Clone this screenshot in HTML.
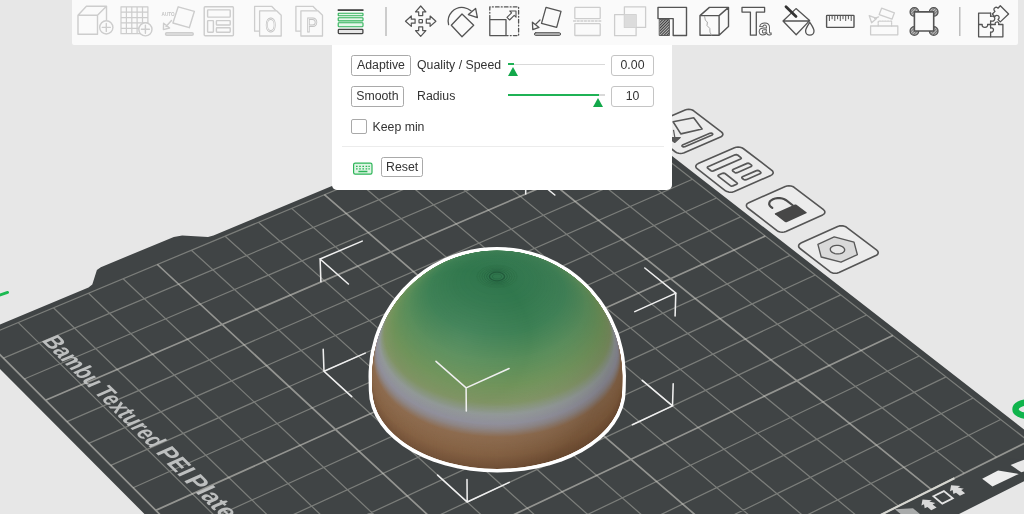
<!DOCTYPE html>
<html><head><meta charset="utf-8"><title>Variable layer height</title>
<style>
html,body{margin:0;padding:0}
body{width:1024px;height:514px;overflow:hidden;background:#e7e7e7;position:relative;font-family:"Liberation Sans",sans-serif;color:#3c3c3c}
svg{position:absolute;left:0;top:0;will-change:transform}
#panel{will-change:transform}
#tbbg{position:absolute;left:72px;top:-4px;width:945.5px;height:48.5px;background:#fafafa;border-radius:2px}
#panel{position:absolute;left:331.5px;top:44.5px;width:340px;height:145px;background:#fff;border-radius:0 0 5px 5px}
#panel div,#panel span{position:absolute;box-sizing:border-box}
.btn{border:1px solid #a9a9a9;border-radius:2.5px;font-size:12.3px;line-height:19px;height:20.5px;text-align:center;color:#333;background:#fff}
.lbl{font-size:12.3px;line-height:20px;color:#333;white-space:nowrap}
.val{border:1px solid #c4c4c4;border-radius:3px;font-size:12.3px;line-height:19px;height:20.5px;width:43px;text-align:center;color:#333}
.trk{height:1.6px;background:#d9d9d9;left:176px;width:97px}
.grn{height:2px;background:#1fb255;left:176px}
.th{width:0;height:0;border-left:5.7px solid transparent;border-right:5.7px solid transparent;border-bottom:9.6px solid #12a84a}
</style></head><body>
<svg width="1024" height="514" viewBox="0 0 1024 514">
<path d="M416.8 787.3L1064.4 460.9L578.5 83.2L213.5 235.4L208 237.1L182.2 235.5L173.8 236.9L100.8 267.2L96.9 270.1L92.3 284.5L88.5 287.5L-31.4 337.5Z" fill="#404445"/>
<path d="M-17.3 337.4L576.9 89.3M438.1 735.5L18.3 322.6M3.4 358.1L599.4 106.8M475.7 716.8L53.5 307.8M24.3 379L622.3 124.6M512.9 698.2L88.5 293.2M549.7 679.9L123.1 278.8M67 421.6L668.8 160.9M88.7 443.4L692.5 179.3M622.3 643.7L191.4 250.2M110.8 465.4L716.5 198M658 625.9L225.1 236.2M133.1 487.7L740.7 216.9M693.4 608.3L258.5 222.2M728.4 590.8L291.6 208.4M178.7 533.3L790.1 255.4M202 556.5L815.3 275M797.4 556.4L357 181.1M225.6 580.1L840.8 294.9M831.4 539.5L389.2 167.6M249.5 604L866.6 315M865.1 522.7L421.2 154.3M898.4 506.1L452.8 141.1M298.3 652.7L919.2 356M323.2 677.6L946.1 376.9M964.2 473.3L515.4 114.9M348.4 702.9L973.2 398M996.5 457.2L546.3 102M374.1 728.5L1000.7 419.5M1028.6 441.2L576.9 89.3" stroke="#d2d2c8" stroke-opacity=".4" stroke-width="1.25" fill="none"/>
<path d="M400.1 754.5L-17.3 337.4M45.5 400.2L645.4 142.7M586.2 661.7L157.4 264.5M155.8 510.4L765.3 236M763.1 573.5L324.4 194.7M273.7 628.2L892.8 335.4M931.5 489.6L484.2 127.9M400.1 754.5L1028.6 441.2" stroke="#dad9d0" stroke-opacity=".54" stroke-width="1.7" fill="none"/>
<text transform="matrix(2.1234 2.0860 -3.5666 1.5183 41.02 340.45)" font-family="Liberation Sans, sans-serif" font-weight="bold" font-size="6.50" fill="#bdbfbf" textLength="23.00" lengthAdjust="spacingAndGlyphs">Bambu</text>
<text transform="matrix(2.1966 2.1579 -3.6007 1.5706 92.88 391.39)" font-family="Liberation Sans, sans-serif" font-weight="bold" font-size="6.50" fill="#bdbfbf" textLength="26.60" lengthAdjust="spacingAndGlyphs">Textured</text>
<text transform="matrix(2.2568 2.2170 -3.6278 1.6136 154.90 452.31)" font-family="Liberation Sans, sans-serif" font-weight="bold" font-size="6.50" fill="#bdbfbf" textLength="11.40" lengthAdjust="spacingAndGlyphs">PEI</text>
<text transform="matrix(2.3044 2.2637 -3.6484 1.6475 183.36 480.27)" font-family="Liberation Sans, sans-serif" font-weight="bold" font-size="6.50" fill="#bdbfbf" textLength="17.60" lengthAdjust="spacingAndGlyphs">Plate</text>
<path d="M693.7 110.8L692.3 110L690.5 109.5L688.7 109.4L686.8 109.5L685.1 110L649 125.5L647.6 126.3L646.8 127.3L646.5 128.4L646.9 129.5L647.8 130.4L675.5 152L676.9 152.8L678.7 153.3L680.6 153.5L682.5 153.3L684.2 152.8L720.5 137.1L721.8 136.3L722.6 135.3L722.9 134.2L722.5 133.1L721.6 132.1Z" fill="#ececec" stroke="#555" stroke-width="1.6" stroke-linejoin="round"/>
<path d="M712.4 133.4L711.2 133L709.9 133.2L682.5 145L681.9 145.7L682.2 146.4L682.3 146.5L683.5 146.9L684.8 146.7L712.2 134.9L712.8 134.2L712.5 133.5ZM673.1 121.8L693.7 117.7L702.1 129L680.8 133.9Z" fill="none" stroke="#585858" stroke-width="1.6" stroke-linejoin="round"/>
<path d="M673.5 129.8L674.9 137.8M668.6 137.7L674.7 142.5L680.2 137.5Z" fill="#585858" stroke="#585858" stroke-width="1.2" stroke-linejoin="round"/>
<path d="M743.2 148.5L741.8 147.7L740 147.2L738.1 147.1L736.2 147.2L734.5 147.7L698.2 163.6L696.8 164.4L696 165.4L695.8 166.5L696.1 167.6L697.1 168.7L725.5 190.8L727 191.6L728.8 192.1L730.7 192.3L732.6 192.1L734.3 191.6L770.8 175.4L772.2 174.6L773 173.6L773.2 172.5L772.8 171.4L771.8 170.3Z" fill="#ececec" stroke="#555" stroke-width="1.6" stroke-linejoin="round"/>
<path d="M737.6 155L736.4 154.6L735.1 154.8L707.9 166.7L707.3 167.3L707.6 168.1L711 170.7L712.1 171.1L713.4 170.9L740.6 159L741.3 158.3L740.9 157.6ZM725 173.5L723.8 173.1L722.5 173.3L718.7 175L718 175.6L718.4 176.4L730.4 185.7L731.6 186.1L732.8 185.9L736.7 184.2L737.4 183.6L737 182.8ZM749.5 163.6L748.4 163.2L747.1 163.4L733 169.5L732.4 170.2L732.7 171L734.7 172.4L735.8 172.9L737.1 172.7L751.2 166.5L751.8 165.8L751.5 165.1ZM758.9 170.8L757.8 170.4L756.5 170.6L742.4 176.7L741.8 177.4L742.1 178.2L743.8 179.5L745 179.9L746.3 179.7L760.4 173.5L761 172.8L760.6 172.1Z" fill="none" stroke="#585858" stroke-width="1.7" stroke-linejoin="round"/>
<path d="M794.1 187.3L792.7 186.5L790.9 186L788.9 185.8L787 186L785.3 186.5L748.8 202.7L747.4 203.6L746.6 204.6L746.4 205.8L746.8 206.9L747.7 208L777 230.6L778.4 231.5L780.2 232L782.2 232.2L784.2 232L785.9 231.5L822.6 214.9L823.9 214.1L824.7 213L824.9 211.9L824.5 210.7L823.5 209.7Z" fill="#ececec" stroke="#555" stroke-width="1.6" stroke-linejoin="round"/>
<path d="M796.5 204.7L795.7 204.4L794.9 204.5L775.2 213.3L774.7 213.8L775 214.3L785 222L785.8 222.3L786.6 222.2L806.3 213.3L806.8 212.9L806.5 212.3Z" fill="#474747"/>
<path d="M772.3 207.9L771 207L769.8 205.7L769.2 204.3L769.3 202.9L769.9 201.5L771.2 200.3L772.9 199.3L775.1 198.5L777.5 198.2L779.9 198.2L782.3 198.5L784.4 199.2L786.1 200.2L793 205.5" fill="none" stroke="#4c4c4c" stroke-width="2.2" stroke-linecap="round"/>
<path d="M846.6 227.3L845.1 226.5L843.3 225.9L841.4 225.7L839.4 225.9L837.7 226.5L800.9 243.1L799.6 244L798.8 245L798.6 246.2L799 247.4L800 248.5L830 271.7L831.5 272.6L833.3 273.2L835.3 273.3L837.3 273.1L839 272.6L875.9 255.6L877.2 254.8L878 253.7L878.2 252.5L877.8 251.3L876.8 250.2Z" fill="#ececec" stroke="#555" stroke-width="1.6" stroke-linejoin="round"/>
<path d="M854 242.1L834.2 236.9L817.9 244.4L821.2 257L841 262.2L857.4 254.7Z" fill="#d9d9d9" stroke="#585858" stroke-width="1.35" stroke-linejoin="round"/>
<path d="M843 247.1L841.7 246.3L840 245.7L838.2 245.3L836.3 245.3L834.5 245.6L832.9 246.1L831.6 246.9L830.7 247.9L830.3 248.9L830.4 250.1L830.9 251.2L831.9 252.2L833.3 253L834.9 253.6L836.7 253.9L838.6 253.9L840.4 253.7L842 253.1L843.3 252.3L844.2 251.4L844.6 250.3L844.6 249.2L844 248.1L843 247.1Z" fill="#e6e6e6" stroke="#585858" stroke-width="1.35"/>
<path d="M982.2 478.8L998.1 470.5L1018.8 473.9L992.4 486.5Z" fill="#ededed"/>
<path d="M1002.6 457.8L1047.6 464.2" stroke="#3f4345" stroke-width="1.3"/>
<path d="M933.4 496.3L943.9 491.1L952.8 498.3L942.3 503.6Z" fill="none" stroke="#e4e4e4" stroke-width="1.8"/>
<path d="M921.4 505.6L922.5 499.6L931.9 500.3L929.3 501.6L935.3 503L932.6 504.4L936.6 507.5L931.3 510.2L927.4 507L924.7 508.3L924 504.3Z" fill="#dadada"/>
<path d="M950 491.3L951.1 485.3L960.5 486L957.9 487.4L963.8 488.7L961.2 490.1L965.1 493.2L959.9 495.8L956 492.7L953.4 494L952.6 490Z" fill="#dadada"/>
<path d="M894.9 509.3L913 508.3L930.9 523L918.9 529Z" fill="#a9abab"/>
<path d="M745.8 582.1L954.4 478.2" stroke="#d6d6d0" stroke-width="2.1" fill="none"/>
<path d="M1010.6 465L1025 459.3V471.2L1021.3 472.2Z" fill="#e7e7e7"/>
<path d="M486.1 299.7L525.6 282.3L554.1 306.3M525.6 282.3L525.6 260.4" stroke="#efefef" stroke-width="1.55" fill="none"/>
<defs><clipPath id="dc"><path d="M372 376.6L372.1 371.6L373 361.5L373.5 356.6L374.4 351.7L377.1 340.8L378.2 337L379.6 333.1L381.1 329.3L384.3 321.9L386.1 318.2L388 314.6L393.4 305.9L395.7 302.5L398.2 299.2L403.4 292.9L406.1 289.9L414.2 282.1L417.2 279.4L425.2 273.2L428.6 271L435.4 266.8L445 261.8L454.8 257.8L463.9 254.9L472.3 252.9L480.7 251.5L489 250.7L497 250.4L505 250.7L513 251.5L521.3 252.8L529.6 254.8L537.8 257.3L546.7 260.8L556.2 265.4L565.5 271L568.9 273.2L575.2 278.1L578.5 280.7L585.8 287.6L588.8 290.6L595.9 299.2L598.5 302.5L600.8 305.9L605.1 312.8L607.2 316.4L609.1 320.1L613.6 330.3L615.1 334.1L616.4 337.9L619.5 349.7L620.3 353.6L621.1 358.5L622.2 370.7L622.5 375.6L622.4 380.5L622.3 385.5L622.2 390.4L621.5 398.6L619.5 406.7L616.1 414.7L611.4 422.3L605.5 429.7L598.4 436.6L590.1 443L580.9 448.8L570.7 454L559.8 458.4L548.1 462.2L535.9 465.1L523.3 467.2L510.3 468.5L497.3 469L484.2 468.5L471.3 467.2L458.7 465.1L446.5 462.2L434.8 458.4L423.8 454L413.7 448.8L404.4 443L396.2 436.6L389.1 429.7L383.1 422.3L378.5 414.7L375.1 406.7L373 398.6L372.3 390.4L372.2 385.5L372.1 380.5Z"/></clipPath>
<radialGradient id="hl" gradientUnits="userSpaceOnUse" cx="462" cy="338" r="150"><stop offset="0" stop-color="#fff" stop-opacity=".07"/><stop offset=".45" stop-color="#fff" stop-opacity=".01"/><stop offset="1" stop-color="#000" stop-opacity=".12"/></radialGradient></defs>
<path d="M372 376.6L372.1 371.6L373 361.5L373.5 356.6L374.4 351.7L377.1 340.8L378.2 337L379.6 333.1L381.1 329.3L384.3 321.9L386.1 318.2L388 314.6L393.4 305.9L395.7 302.5L398.2 299.2L403.4 292.9L406.1 289.9L414.2 282.1L417.2 279.4L425.2 273.2L428.6 271L435.4 266.8L445 261.8L454.8 257.8L463.9 254.9L472.3 252.9L480.7 251.5L489 250.7L497 250.4L505 250.7L513 251.5L521.3 252.8L529.6 254.8L537.8 257.3L546.7 260.8L556.2 265.4L565.5 271L568.9 273.2L575.2 278.1L578.5 280.7L585.8 287.6L588.8 290.6L595.9 299.2L598.5 302.5L600.8 305.9L605.1 312.8L607.2 316.4L609.1 320.1L613.6 330.3L615.1 334.1L616.4 337.9L619.5 349.7L620.3 353.6L621.1 358.5L622.2 370.7L622.5 375.6L622.4 380.5L622.3 385.5L622.2 390.4L621.5 398.6L619.5 406.7L616.1 414.7L611.4 422.3L605.5 429.7L598.4 436.6L590.1 443L580.9 448.8L570.7 454L559.8 458.4L548.1 462.2L535.9 465.1L523.3 467.2L510.3 468.5L497.3 469L484.2 468.5L471.3 467.2L458.7 465.1L446.5 462.2L434.8 458.4L423.8 454L413.7 448.8L404.4 443L396.2 436.6L389.1 429.7L383.1 422.3L378.5 414.7L375.1 406.7L373 398.6L372.3 390.4L372.2 385.5L372.1 380.5Z" fill="#fff" stroke="#fff" stroke-width="7" stroke-linejoin="round"/>
<g clip-path="url(#dc)">
<ellipse cx="497.3" cy="390.4" rx="124.9" ry="78.6" fill="#765236"/>
<ellipse cx="497.3" cy="389.4" rx="125" ry="78.6" fill="#775337"/>
<ellipse cx="497.3" cy="388.4" rx="125" ry="78.6" fill="#785438"/>
<ellipse cx="497.3" cy="387.4" rx="125" ry="78.6" fill="#7a5538"/>
<ellipse cx="497.3" cy="386.4" rx="125" ry="78.6" fill="#7b5639"/>
<ellipse cx="497.3" cy="385.5" rx="125.1" ry="78.5" fill="#7c573a"/>
<ellipse cx="497.3" cy="384.5" rx="125.1" ry="78.5" fill="#7d583a"/>
<ellipse cx="497.3" cy="383.5" rx="125.1" ry="78.5" fill="#7e593b"/>
<ellipse cx="497.3" cy="382.5" rx="125.1" ry="78.5" fill="#805a3c"/>
<ellipse cx="497.3" cy="381.5" rx="125.1" ry="78.5" fill="#815b3d"/>
<ellipse cx="497.3" cy="380.5" rx="125.2" ry="78.5" fill="#825c3e"/>
<ellipse cx="497.3" cy="379.5" rx="125.2" ry="78.5" fill="#835e3e"/>
<ellipse cx="497.2" cy="378.6" rx="125.2" ry="78.5" fill="#845f3f"/>
<ellipse cx="497.2" cy="377.6" rx="125.2" ry="78.5" fill="#866040"/>
<ellipse cx="497.2" cy="376.6" rx="125.2" ry="78.5" fill="#866040"/>
<ellipse cx="497.2" cy="375.6" rx="125.2" ry="78.4" fill="#876141"/>
<ellipse cx="497.2" cy="374.6" rx="125.2" ry="78.4" fill="#876142"/>
<ellipse cx="497.2" cy="373.6" rx="125.2" ry="78.3" fill="#876242"/>
<ellipse cx="497.2" cy="372.6" rx="125.1" ry="78.3" fill="#886343"/>
<ellipse cx="497.2" cy="371.6" rx="125.1" ry="78.2" fill="#886344"/>
<ellipse cx="497.2" cy="370.7" rx="125" ry="78.2" fill="#886444"/>
<ellipse cx="497.2" cy="369.7" rx="124.9" ry="78.1" fill="#896445"/>
<ellipse cx="497.2" cy="368.7" rx="124.8" ry="78" fill="#896546"/>
<ellipse cx="497.2" cy="367.7" rx="124.7" ry="77.9" fill="#896546"/>
<ellipse cx="497.2" cy="366.7" rx="124.6" ry="77.8" fill="#8a6647"/>
<ellipse cx="497.2" cy="365.7" rx="124.5" ry="77.7" fill="#8a6648"/>
<ellipse cx="497.2" cy="364.7" rx="124.3" ry="77.6" fill="#8b6748"/>
<ellipse cx="497.2" cy="363.7" rx="124.2" ry="77.5" fill="#8b6749"/>
<ellipse cx="497.2" cy="362.7" rx="124" ry="77.4" fill="#8b684a"/>
<ellipse cx="497.2" cy="361.7" rx="123.8" ry="77.2" fill="#8c684a"/>
<ellipse cx="497.2" cy="360.7" rx="123.6" ry="77.1" fill="#8c694b"/>
<ellipse cx="497.2" cy="359.7" rx="123.4" ry="76.9" fill="#8c6d54"/>
<ellipse cx="497.2" cy="358.7" rx="123.2" ry="76.8" fill="#8c715c"/>
<ellipse cx="497.2" cy="357.7" rx="123" ry="76.6" fill="#8c7565"/>
<ellipse cx="497.2" cy="356.7" rx="122.7" ry="76.4" fill="#8c796d"/>
<ellipse cx="497.2" cy="355.7" rx="122.5" ry="76.2" fill="#8c7d76"/>
<ellipse cx="497.2" cy="354.7" rx="122.2" ry="76" fill="#8c817e"/>
<ellipse cx="497.2" cy="353.7" rx="121.9" ry="75.8" fill="#8c8586"/>
<ellipse cx="497.2" cy="352.7" rx="121.6" ry="75.6" fill="#8d878b"/>
<ellipse cx="497.2" cy="351.7" rx="121.3" ry="75.4" fill="#8e8990"/>
<ellipse cx="497.2" cy="350.7" rx="120.9" ry="75.1" fill="#8e8c95"/>
<ellipse cx="497.2" cy="349.7" rx="120.6" ry="74.9" fill="#8f8e9a"/>
<ellipse cx="497.2" cy="348.7" rx="120.2" ry="74.7" fill="#8f8f99"/>
<ellipse cx="497.2" cy="347.7" rx="119.8" ry="74.4" fill="#8f9099"/>
<ellipse cx="497.1" cy="346.6" rx="119.4" ry="74.1" fill="#8f9298"/>
<ellipse cx="497.1" cy="345.6" rx="119" ry="73.9" fill="#909398"/>
<ellipse cx="497.1" cy="344.6" rx="118.6" ry="73.6" fill="#909497"/>
<ellipse cx="497.1" cy="343.6" rx="118.2" ry="73.3" fill="#909597"/>
<ellipse cx="497.1" cy="342.6" rx="117.7" ry="73" fill="#909796"/>
<ellipse cx="497.1" cy="341.6" rx="117.3" ry="72.7" fill="#8f9792"/>
<ellipse cx="497.1" cy="340.6" rx="116.8" ry="72.3" fill="#8c968c"/>
<ellipse cx="497.1" cy="339.6" rx="116.3" ry="72" fill="#8a9585"/>
<ellipse cx="497.1" cy="338.5" rx="115.8" ry="71.7" fill="#88957f"/>
<ellipse cx="497.1" cy="337.5" rx="115.2" ry="71.3" fill="#869479"/>
<ellipse cx="497.1" cy="336.5" rx="114.7" ry="71" fill="#849473"/>
<ellipse cx="497.1" cy="335.5" rx="114.1" ry="70.6" fill="#82936c"/>
<ellipse cx="497.1" cy="334.5" rx="113.5" ry="70.2" fill="#7f9266"/>
<ellipse cx="497.1" cy="333.5" rx="112.9" ry="69.8" fill="#7e9262"/>
<ellipse cx="497.1" cy="332.4" rx="112.3" ry="69.4" fill="#7c9261"/>
<ellipse cx="497.1" cy="331.4" rx="111.7" ry="69" fill="#7b9260"/>
<ellipse cx="497.1" cy="330.4" rx="111" ry="68.6" fill="#79925f"/>
<ellipse cx="497.1" cy="329.4" rx="110.3" ry="68.1" fill="#78925e"/>
<ellipse cx="497.1" cy="328.4" rx="109.7" ry="67.7" fill="#77925d"/>
<ellipse cx="497.1" cy="327.3" rx="108.9" ry="67.2" fill="#75925d"/>
<ellipse cx="497.1" cy="326.3" rx="108.2" ry="66.7" fill="#74925c"/>
<ellipse cx="497.1" cy="325.3" rx="107.5" ry="66.3" fill="#73925b"/>
<ellipse cx="497.1" cy="324.3" rx="106.7" ry="65.8" fill="#71925a"/>
<ellipse cx="497.1" cy="323.2" rx="105.9" ry="65.2" fill="#709259"/>
<ellipse cx="497.1" cy="322.2" rx="105.1" ry="64.7" fill="#6e9258"/>
<ellipse cx="497.1" cy="321.2" rx="104.2" ry="64.2" fill="#6d9258"/>
<ellipse cx="497.1" cy="320.2" rx="103.4" ry="63.6" fill="#6b9158"/>
<ellipse cx="497.1" cy="319.1" rx="102.5" ry="63.1" fill="#6a9158"/>
<ellipse cx="497.1" cy="318.1" rx="101.6" ry="62.5" fill="#689158"/>
<ellipse cx="497.1" cy="317.1" rx="100.6" ry="61.9" fill="#679058"/>
<ellipse cx="497.1" cy="316" rx="99.7" ry="61.3" fill="#659058"/>
<ellipse cx="497.1" cy="315" rx="98.7" ry="60.7" fill="#638f58"/>
<ellipse cx="497.1" cy="314" rx="97.7" ry="60" fill="#628f58"/>
<ellipse cx="497.1" cy="312.9" rx="96.6" ry="59.4" fill="#608f58"/>
<ellipse cx="497.1" cy="311.9" rx="95.6" ry="58.7" fill="#5f8e58"/>
<ellipse cx="497.1" cy="310.9" rx="94.5" ry="58" fill="#5d8e58"/>
<ellipse cx="497" cy="309.8" rx="93.3" ry="57.3" fill="#5b8d58"/>
<ellipse cx="497" cy="308.8" rx="92.2" ry="56.5" fill="#5a8d58"/>
<ellipse cx="497" cy="307.8" rx="91" ry="55.8" fill="#588d58"/>
<ellipse cx="497" cy="306.7" rx="89.7" ry="55" fill="#578c58"/>
<ellipse cx="497" cy="305.7" rx="88.5" ry="54.2" fill="#558b58"/>
<ellipse cx="497" cy="304.6" rx="87.2" ry="53.4" fill="#528a57"/>
<ellipse cx="497" cy="303.6" rx="85.8" ry="52.6" fill="#508957"/>
<ellipse cx="497" cy="302.6" rx="84.4" ry="51.7" fill="#4e8856"/>
<ellipse cx="497" cy="301.5" rx="83" ry="50.8" fill="#4c8756"/>
<ellipse cx="497" cy="300.5" rx="81.5" ry="49.9" fill="#4a8655"/>
<ellipse cx="497" cy="299.4" rx="80" ry="48.9" fill="#488555"/>
<ellipse cx="497" cy="298.4" rx="78.4" ry="47.9" fill="#468455"/>
<ellipse cx="497" cy="297.4" rx="76.8" ry="46.9" fill="#448354"/>
<ellipse cx="497" cy="296.3" rx="75.1" ry="45.9" fill="#428254"/>
<ellipse cx="497" cy="295.3" rx="73.3" ry="44.8" fill="#408153"/>
<ellipse cx="497" cy="294.2" rx="71.5" ry="43.7" fill="#3e8053"/>
<ellipse cx="497" cy="293.2" rx="69.6" ry="42.5" fill="#3b7f52"/>
<ellipse cx="497" cy="292.1" rx="67.7" ry="41.3" fill="#3a7e52"/>
<ellipse cx="497" cy="291.1" rx="65.6" ry="40" fill="#397d51"/>
<ellipse cx="497" cy="290" rx="63.5" ry="38.7" fill="#387c51"/>
<ellipse cx="497" cy="289" rx="61.2" ry="37.3" fill="#377c50"/>
<ellipse cx="497" cy="287.9" rx="58.8" ry="35.9" fill="#367b4f"/>
<ellipse cx="497" cy="286.9" rx="56.3" ry="34.3" fill="#357a4f"/>
<ellipse cx="497" cy="285.8" rx="53.7" ry="32.7" fill="#347a4e"/>
<ellipse cx="497" cy="284.8" rx="50.9" ry="31" fill="#33794e"/>
<ellipse cx="497" cy="283.7" rx="47.9" ry="29.1" fill="#32784d"/>
<ellipse cx="497" cy="282.7" rx="44.6" ry="27.1" fill="#31774c"/>
<ellipse cx="497" cy="281.6" rx="41" ry="25" fill="#30774c"/>
<ellipse cx="497" cy="280.5" rx="37.1" ry="22.6" fill="#2f764c"/>
<ellipse cx="497" cy="279.5" rx="32.6" ry="19.8" fill="#2f764b"/>
<ellipse cx="497" cy="278.4" rx="27.4" ry="16.6" fill="#2e754b"/>
<ellipse cx="497" cy="277.4" rx="20.7" ry="12.6" fill="#2e754a"/>
<ellipse cx="497" cy="276.3" rx="10.4" ry="6.3" fill="#2d744a"/>
<path d="M372 376.6L372.1 371.6L373 361.5L373.5 356.6L374.4 351.7L377.1 340.8L378.2 337L379.6 333.1L381.1 329.3L384.3 321.9L386.1 318.2L388 314.6L393.4 305.9L395.7 302.5L398.2 299.2L403.4 292.9L406.1 289.9L414.2 282.1L417.2 279.4L425.2 273.2L428.6 271L435.4 266.8L445 261.8L454.8 257.8L463.9 254.9L472.3 252.9L480.7 251.5L489 250.7L497 250.4L505 250.7L513 251.5L521.3 252.8L529.6 254.8L537.8 257.3L546.7 260.8L556.2 265.4L565.5 271L568.9 273.2L575.2 278.1L578.5 280.7L585.8 287.6L588.8 290.6L595.9 299.2L598.5 302.5L600.8 305.9L605.1 312.8L607.2 316.4L609.1 320.1L613.6 330.3L615.1 334.1L616.4 337.9L619.5 349.7L620.3 353.6L621.1 358.5L622.2 370.7L622.5 375.6L622.4 380.5L622.3 385.5L622.2 390.4L621.5 398.6L619.5 406.7L616.1 414.7L611.4 422.3L605.5 429.7L598.4 436.6L590.1 443L580.9 448.8L570.7 454L559.8 458.4L548.1 462.2L535.9 465.1L523.3 467.2L510.3 468.5L497.3 469L484.2 468.5L471.3 467.2L458.7 465.1L446.5 462.2L434.8 458.4L423.8 454L413.7 448.8L404.4 443L396.2 436.6L389.1 429.7L383.1 422.3L378.5 414.7L375.1 406.7L373 398.6L372.3 390.4L372.2 385.5L372.1 380.5Z" fill="url(#hl)"/>
<ellipse cx="497" cy="276.5" rx="4.5" ry="2.5" fill="none" stroke="#143f2a" stroke-opacity="0.22" stroke-width="0.8"/>
<ellipse cx="497" cy="276.5" rx="7.6" ry="4.3" fill="none" stroke="#143f2a" stroke-opacity="0.5" stroke-width="1.3"/>
<ellipse cx="497" cy="276.5" rx="10.4" ry="5.8" fill="none" stroke="#143f2a" stroke-opacity="0.32" stroke-width="0.8"/>
<ellipse cx="497" cy="276.5" rx="12.8" ry="7.2" fill="none" stroke="#143f2a" stroke-opacity="0.26" stroke-width="0.8"/>
<ellipse cx="497" cy="276.5" rx="15.2" ry="8.5" fill="none" stroke="#143f2a" stroke-opacity="0.18" stroke-width="0.8"/>
<ellipse cx="497" cy="276.5" rx="17.6" ry="9.9" fill="none" stroke="#143f2a" stroke-opacity="0.12" stroke-width="0.8"/>
<ellipse cx="497" cy="276.5" rx="20" ry="11.2" fill="none" stroke="#143f2a" stroke-opacity="0.07" stroke-width="0.8"/>
</g>
<path d="M509.2 482.4L467.2 502L437.6 475.1M467.2 502L467 479.6M509.1 368.5L466.1 387.9L436 361.3M466.1 387.9L466.3 411.1M365.2 353.1L324 371.3L351.7 396.6M324 371.3L323.2 349.2M362.2 241.1L320.1 259L348.4 284M320.1 259L320.9 281.8M632.4 424.7L672.5 405.9L642.2 380.4M672.5 405.9L673.2 383.7M634.8 311.6L675.8 293.1L644.8 268M675.8 293.1L675.1 316M485.5 188.5L525.8 171.4L554.8 195M525.8 171.4L525.7 193.9" stroke="#efefef" stroke-width="1.55" fill="none" stroke-linecap="round"/>
<path d="M-3 295.9L7.6 292.4" stroke="#1cba52" stroke-width="2.8" stroke-linecap="round"/>
<ellipse cx="1028.5" cy="409.2" rx="13" ry="6.8" stroke="#10b44c" stroke-width="6.4" fill="none"/>
</svg>
<div id="tbbg"></div>
<svg width="1024" height="46" viewBox="0 0 1024 46" style="opacity:.999">
<g fill="none" stroke="#cdcdcd" stroke-width="1.4" stroke-linejoin="round" stroke-linecap="round" >
<path d="M78 15.2H97.5V34.2H78ZM78 15.2L86.4 6.3H106.5L97.5 15.2M106.5 6.3V20"/>
<circle cx="106.3" cy="27.4" r="6.6" fill="#fafafa"/><path d="M102.3 27.4H110.3M106.3 23.4V31.4"/>
</g>
<g fill="none" stroke="#cdcdcd" stroke-width="1.2" stroke-linejoin="round" stroke-linecap="round" >
<path d="M121.0 6.8V33.7M121 6.8H147.9M126.4 6.8V33.7M121 12.2H147.9M131.8 6.8V33.7M121 17.6H147.9M137.1 6.8V33.7M121 22.9H147.9M142.5 6.8V33.7M121 28.3H147.9M147.9 6.8V33.7M121 33.7H147.9"/>
<circle cx="145.4" cy="29.3" r="6.6" fill="#fafafa" stroke-width="1.4"/><path d="M141.4 29.3H149.4M145.4 25.3V33.3" stroke-width="1.4"/>
</g>
<g fill="none" stroke="#cdcdcd" stroke-width="1.4" stroke-linejoin="round" stroke-linecap="round" >
<path d="M178.2 6.8L194.4 11.3L189.3 27.7L172.9 23Z"/>
<path d="M171.5 20.5L166 26.5M163.6 23.2L163.4 29.6L169.6 28Z"/>
<rect x="165.5" y="32.6" width="27.8" height="2.8" rx="1.4" fill="#dedede"/>
</g>
<text x="161.6" y="15.8" font-family="Liberation Sans, sans-serif" font-weight="bold" font-size="5.2" fill="#c4c4c4" textLength="13" lengthAdjust="spacingAndGlyphs">AUTO</text>
<g fill="none" stroke="#cdcdcd" stroke-width="1.4" stroke-linejoin="round" stroke-linecap="round" >
<rect x="204.2" y="6.8" width="29.2" height="28.9" rx="1"/><rect x="207.6" y="9.9" width="22.6" height="7.2" rx=".6"/><rect x="207.6" y="20.6" width="5.8" height="11.6" rx=".6"/><rect x="216.4" y="20.6" width="13.8" height="4.4" rx=".6"/><rect x="216.4" y="27.8" width="13.8" height="4.4" rx=".6"/>
</g>
<g fill="none" stroke="#cdcdcd" stroke-width="1.3" stroke-linejoin="round" stroke-linecap="round" >
<path d="M254.6 6.3H271.6L276.0 10.8V31.2H254.6Z" />
<path d="M259.6 10.8H276.6L281.2 15.3V36H259.6Z" fill="#fafafa"/>
</g>
<text x="270.8" y="32.3" text-anchor="middle" font-family="Liberation Sans, sans-serif" font-size="21" fill="#fafafa" stroke="#c4c4c4" stroke-width="1" opacity=".99" textLength="10.5" lengthAdjust="spacingAndGlyphs">O</text>
<g fill="none" stroke="#cdcdcd" stroke-width="1.3" stroke-linejoin="round" stroke-linecap="round" >
<path d="M295.9 6.3H312.9L317.3 10.8V31.2H295.9Z" />
<path d="M300.9 10.8H317.9L322.5 15.3V36H300.9Z" fill="#fafafa"/>
</g>
<text x="312.1" y="32.3" text-anchor="middle" font-family="Liberation Sans, sans-serif" font-size="21" fill="#fafafa" stroke="#c4c4c4" stroke-width="1" opacity=".99" textLength="11.5" lengthAdjust="spacingAndGlyphs">P</text>
<rect x="337.7" y="9.2" width="25.8" height="1.8" fill="#444"/>
<g fill="#e6f6ea" stroke="#2eb358" stroke-width="1.1">
<rect x="338.2" y="13.2" width="24.8" height="2.6" rx=".6"/><rect x="338.2" y="17.7" width="24.8" height="3.2" rx=".6"/><rect x="338.2" y="22.8" width="24.8" height="3.9" rx=".6"/>
</g>
<rect x="338.3" y="29.4" width="24.6" height="4.2" rx=".8" fill="#e6e6e6" stroke="#444" stroke-width="1.3"/>
<path d="M386 7V36M959.8 7V36" stroke="#b4b4b4" stroke-width="1.3"/>
<g fill="none" stroke="#545454" stroke-width="1.2" stroke-linejoin="round" stroke-linecap="round" >
<path transform="rotate(0 420.7 21.2)" d="M420.7 6.0L425.9 11.8H422.7V15.6H418.7V11.8H415.5Z"/>
<path transform="rotate(90 420.7 21.2)" d="M420.7 6.0L425.9 11.8H422.7V15.6H418.7V11.8H415.5Z"/>
<path transform="rotate(180 420.7 21.2)" d="M420.7 6.0L425.9 11.8H422.7V15.6H418.7V11.8H415.5Z"/>
<path transform="rotate(270 420.7 21.2)" d="M420.7 6.0L425.9 11.8H422.7V15.6H418.7V11.8H415.5Z"/>
<rect x="419.0" y="19.5" width="3.4" height="3.4" rx=".5"/>
</g>
<g fill="none" stroke="#545454" stroke-width="1.3" stroke-linejoin="round" stroke-linecap="round" >
<path d="M462 14L473.7 25.2L462 36.7L451.3 25.2Z"/>
<path d="M448.6 24.6C446 14.5 455 6.2 464 7.6C467 8.1 469 9.2 471 10.8"/>
<path d="M475.6 8.4L477.4 17.6L468.4 14.6Z"/>
</g>
<g fill="none" stroke="#545454" stroke-width="1.3" stroke-linejoin="round" stroke-linecap="round" >
<path d="M489.8 19V6.9H518.6V35.6H506.5" stroke-dasharray="3.6 2.2 0.9 2.2"/>
<rect x="489.8" y="19.6" width="16.2" height="16"/>
<path d="M507 17.4L511.6 12.8L509.8 11H516V17.2L514.2 15.4L509.6 20Z" stroke-width="1.1"/>
</g>
<g fill="none" stroke="#545454" stroke-width="1.3" stroke-linejoin="round" stroke-linecap="round" >
<path d="M546 7.4L561 11.3L556.7 27.3L541.5 23.4Z"/>
<path d="M540 20L535.6 24.4M532.4 22.2L532.8 29.6L539 27.4Z"/>
<rect x="534.4" y="32.7" width="26.2" height="2.7" rx="1.35" fill="#b8b8b8" stroke-width="1"/>
</g>
<g fill="none" stroke="#cdcdcd" stroke-width="1.3" stroke-linejoin="round" stroke-linecap="round" >
<rect x="574.8" y="7.4" width="25.4" height="11.2" rx=".6"/><rect x="574.8" y="23.6" width="25.4" height="11.9" rx=".6"/><path d="M573.6 21H601.4" stroke-dasharray="2 1.6"/>
</g>
<g fill="none" stroke="#cdcdcd" stroke-width="1.3" stroke-linejoin="round" stroke-linecap="round" >
<rect x="624.4" y="6.8" width="21.2" height="20.6"/><rect x="614.6" y="14.7" width="21.5" height="21"/><rect x="624.4" y="14.7" width="11.7" height="12.7" fill="#dcdcdc" stroke="none"/>
</g>
<defs><pattern id="ht" width="2" height="2" patternUnits="userSpaceOnUse" patternTransform="rotate(-45)"><rect width="2" height="2" fill="#c4c4c4"/><rect width="2" height="1.1" fill="#3e3e3e"/></pattern><pattern id="ht2" width="2" height="2" patternUnits="userSpaceOnUse" patternTransform="rotate(-45)"><rect width="2" height="2" fill="#bdbdbd"/><rect width="2" height="1" fill="#777"/></pattern></defs>
<g fill="none" stroke="#545454" stroke-width="1.4" stroke-linejoin="round" stroke-linecap="round" >
<path d="M658 7.4H686.5V35.5H673.2V18.6H658Z"/>
<rect x="659.6" y="19.6" width="9.8" height="15.9" fill="url(#ht)" stroke="#444" stroke-width=".8"/>
</g>
<g fill="none" stroke="#545454" stroke-width="1.4" stroke-linejoin="round" stroke-linecap="round" >
<path d="M700 15.6H719.1V35.2H700ZM700 15.6L709.4 7.4H728.5L719.1 15.6M728.5 7.4V26.4L719.1 35.2"/>
<path d="M704.6 16.4L705.4 20.4L707.4 22L707 25.6L709.8 28.4L710 32.2L711.4 35" stroke="#a8a8a8" stroke-width="1"/>
</g>
<g fill="none" stroke="#545454" stroke-width="1.3" stroke-linejoin="round" stroke-linecap="round" >
<path d="M742 7.4H764.6V12.1H756.3V35.2H750.4V12.1H742Z"/>
</g>
<text x="758.6" y="35.4" font-family="Liberation Sans, sans-serif" font-weight="bold" font-size="22.5" fill="#fafafa" stroke="#545454" stroke-width=".9" opacity=".99">a</text>
<g fill="none" stroke="#545454" stroke-width="1.3" stroke-linejoin="round" stroke-linecap="round" >
<path d="M783 21L796 8.6L809.6 20.6L796.2 34.7ZM783 21H809.6"/>
<path d="M786 6.8L796 16.4" stroke="#333" stroke-width="2.8"/>
<path d="M809.8 22.4C812.4 26.4 814 28.6 814 31C814 33.4 812.2 35.2 809.8 35.2C807.4 35.2 805.6 33.4 805.6 31C805.6 28.6 807.2 26.4 809.8 22.4Z"/>
</g>
<g fill="none" stroke="#545454" stroke-width="1.4" stroke-linejoin="round" stroke-linecap="round" >
<rect x="826.6" y="15.4" width="27.4" height="12" rx=".6"/>
<path d="M829.4 16V20.6M832.1 16V18.8M834.8 16V20.6M837.6 16V18.8M840.3 16V20.6M843.0 16V18.8M845.7 16V20.6M848.4 16V18.8M851.2 16V20.6" stroke-width="1"/>
</g>
<g fill="none" stroke="#cdcdcd" stroke-width="1.3" stroke-linejoin="round" stroke-linecap="round" >
<rect x="870.6" y="26" width="27.2" height="8.8"/><path d="M878.2 26V21.2H891.6V26" stroke-dasharray="1.6 1.2"/>
<path d="M881.6 8.2L894.4 12.8L892 19.2L879.2 14.6Z"/>
<path d="M878.6 16.8L874.6 18.4M869.2 15.6L871.6 22.8L876.6 18.4Z"/>
</g>
<g fill="none" stroke="#545454" stroke-width="1.3" stroke-linejoin="round" stroke-linecap="round" >
<circle cx="914.4" cy="11.9" r="4.3" fill="url(#ht2)"/>
<circle cx="933.7" cy="11.9" r="4.3" fill="url(#ht2)"/>
<circle cx="914.4" cy="31.0" r="4.3" fill="url(#ht2)"/>
<circle cx="933.7" cy="31.0" r="4.3" fill="url(#ht2)"/>
<rect x="914.4" y="11.9" width="19.3" height="19.1" fill="#fafafa" stroke-width="1.6"/>
</g>
<g fill="none" stroke="#545454" stroke-width="1.3" stroke-linejoin="round" stroke-linecap="round" >
<path d="M990.6 13.1H978.6V36.8H1002.9V24.5H998.6C999.4 22.6 997.8 21.6 996.6 22C995.2 22.4 994.8 23.6 995.4 24.5H990.6"/>
<path d="M990.6 13.1V16.4C993 15.4 994.8 16.6 994.8 18.6C994.8 20.6 993 21.8 990.6 20.8V24.5"/>
<path d="M978.6 24.5H982.2C981.8 26.6 983.4 27.6 985 27.4C986.8 27.2 988 26 987.6 24.5H990.6"/>
<path d="M990.6 24.5V28C992.8 27.4 993.8 29 993.4 30.4C993 32 991.8 32.4 990.6 32V36.8"/>
<path d="M1000.3 5.7L1008.6 14L1000.3 21.9L998 19.6C999.6 18.4 999.4 16.6 998.2 15.8C996.8 15 995.6 15.6 994.8 16.6L992.4 14L995 11.4C993.6 10.4 993.6 8.6 994.8 7.8C996.2 6.8 997.6 7.4 998 8.2Z" fill="#fafafa"/>
</g>
</svg>
<div id="panel">
<div class="btn" style="left:19px;top:10.2px;width:60px">Adaptive</div>
<span class="lbl" style="left:85px;top:9.8px">Quality / Speed</span>
<div class="trk" style="top:18.6px"></div><div class="grn" style="top:18.4px;width:6px"></div><div class="th" style="left:176px;top:21.8px"></div>
<div class="val" style="left:279px;top:10.2px">0.00</div>
<div class="btn" style="left:19px;top:41.1px;width:52.8px">Smooth</div>
<span class="lbl" style="left:85px;top:40.8px">Radius</span>
<div class="trk" style="top:49.4px"></div><div class="grn" style="top:49.2px;width:90.5px"></div><div class="th" style="left:261px;top:52.7px"></div>
<div class="val" style="left:279px;top:41.1px">10</div>
<div style="left:19px;top:73.8px;width:15.6px;height:15.6px;border:1px solid #a9a9a9;border-radius:2px"></div>
<span class="lbl" style="left:40.5px;top:72px">Keep min</span>
<div style="left:9.5px;top:101.4px;width:322px;height:1px;background:#ececec"></div>
<div class="btn" style="left:48.9px;top:111.8px;width:42.4px">Reset</div>
</div>
<svg width="1024" height="514" viewBox="0 0 1024 514" style="pointer-events:none">
<g fill="#dff5e5" stroke="#2db558" stroke-width="1.2"><rect x="353.6" y="163.2" width="18.4" height="11" rx="1.6"/></g>
<path d="M356 166.4H357.6M359.2 166.4H360.8M362.4 166.4H364M365.6 166.4H367.2M368.4 166.4H369.8M356 168.9H357.6M359.2 168.9H360.8M362.4 168.9H364M365.6 168.9H367.2M368.4 168.9H369.8M358.4 171.5H367.4" stroke="#2db558" stroke-width="1.4"/>
</svg>
</body></html>
